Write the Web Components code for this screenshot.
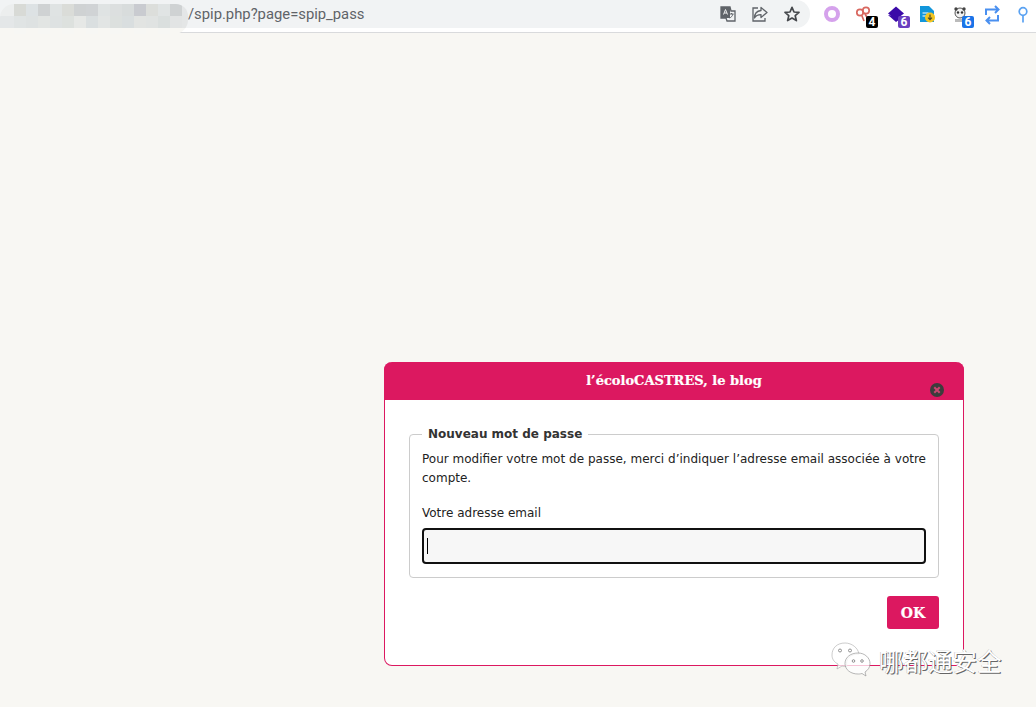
<!DOCTYPE html>
<html lang="fr">
<head>
<meta charset="utf-8">
<title>Nouveau mot de passe</title>
<style>
html, body { margin: 0; height: 100%; overflow: hidden; background: #f8f7f3; }
body { font-family: "DejaVu Sans", sans-serif; position: relative; }
</style>
</head>
<body>
<browser-bar url="/spip.php?page=spip_pass"></browser-bar>
<page-area>
  <pass-dialog heading="l’écoloCASTRES, le blog">
    <pass-form legend="Nouveau mot de passe"></pass-form>
  </pass-dialog>
</page-area>
<wechat-mark name="哪都通安全"></wechat-mark>

<script>
// top chrome toolbar, with the pixelated part of the url on top of it
const barTemplate = document.createElement('template');
barTemplate.innerHTML = `
<style>
:host { display: block; height: 33px; box-sizing: border-box; background: #fff; border-bottom: 1px solid #d9dadc; position: relative; }
.row { display: flex; align-items: flex-start; height: 32px; }
.omni { flex: 0 0 810px; height: 28px; box-sizing: border-box; background: #f1f3f4; border-radius: 0 14px 14px 0; display: flex; align-items: center; padding-left: 188px; padding-right: 9px; }
.url { flex: 1; font: 14.8px "Roboto", "Liberation Sans", sans-serif; color: #5f6368; }
.omni svg { width: 18px; height: 18px; margin-left: 14px; flex: none; }
.exts { flex: 1; height: 28px; position: relative; }
.ext { position: absolute; top: 4px; width: 22px; height: 22px; }
.ext svg { width: 22px; height: 22px; display: block; }
.badge { position: absolute; width: 12px; height: 12px; border-radius: 2px; color: #fff; font: bold 12px/12px "Roboto", sans-serif; text-align: center; left: 13px; top: 12px; }
.mosaic { position: absolute; left: 0; top: 4px; width: 188px; height: 30px; border-radius: 14px 12px 14px 0; overflow: hidden; display: grid; grid-template-columns: 14px repeat(15, 12px); grid-auto-rows: 12px; justify-content: start; }
.mosaic i { display: block; }
</style>
<div class="row">
  <div class="omni">
    <span class="url"></span>
    <svg viewBox="0 0 18 18"><path d="M2 2h9l1 4h4v10H8l-1-3H2z" fill="none" stroke="#5f6368" stroke-width="1.3"/><path d="M2 2h9v11H2z" fill="#5f6368"/><path d="M4.500 9.500 6.500 4.500l2 5M5.200 8h2.600" fill="none" stroke="#eee" stroke-width="1"/><path d="M10.500 9h4M12.500 8v1M14 9c-.5 2-2 3.500-3.500 4" fill="none" stroke="#5f6368" stroke-width="1"/></svg>
    <svg viewBox="0 0 18 18"><path d="M10 2.500 16 7.500l-6 5V9.600C6.500 9.600 4.500 11 3.500 13c0-4 2.500-7 6.500-7.500z" fill="none" stroke="#5f6368" stroke-width="1.3" stroke-linejoin="round"/><path d="M7 3H2v13h12v-3" fill="none" stroke="#5f6368" stroke-width="1.3"/></svg>
    <svg viewBox="0 0 18 18"><path d="M9 2.300 11 7l5 .4-3.800 3.300 1.200 4.900L9 13l-4.400 2.600 1.200-4.900L2 7.400 7 7z" fill="none" stroke="#45484c" stroke-width="1.700" stroke-linejoin="round"/></svg>
  </div>
  <div class="exts">
    <div class="ext" style="left:11px"><svg viewBox="0 0 22 22"><circle cx="11" cy="10" r="6" fill="none" stroke="#d5a2ec" stroke-width="4"/></svg></div>
    <div class="ext" style="left:43px"><svg viewBox="0 0 22 22"><circle cx="7" cy="8.500" r="3.200" fill="none" stroke="#d8675f" stroke-width="1.700"/><circle cx="13" cy="6.500" r="3.200" fill="none" stroke="#d8675f" stroke-width="1.700"/><path d="M12 10l3 5M9 12l2 5" stroke="#d8675f" stroke-width="1.700"/></svg><span class="badge" style="background:#000">4</span></div>
    <div class="ext" style="left:75px"><svg viewBox="0 0 22 22"><path d="M3 9.500 11 2.500l8 7-8 6z" fill="#3b0aa8"/><path d="M3 11l8 7 7-5" fill="#3b0aa8"/></svg><span class="badge" style="background:#6a3fc0">6</span></div>
    <div class="ext" style="left:105px"><svg viewBox="0 0 22 22"><path d="M5 2h9l5 5v11H5z" fill="#1296db"/><path d="M7.500 9h6M7.500 12h4" stroke="#fff" stroke-width="1.200"/><circle cx="15" cy="13.500" r="5" fill="#f3c521"/><path d="M15 10.500v5M13 13.700l2 2 2-2" fill="none" stroke="#4a4a2a" stroke-width="1.200"/></svg></div>
    <div class="ext" style="left:139px"><svg viewBox="0 0 22 22"><circle cx="11" cy="9" r="5" fill="#f2f2f2" stroke="#555" stroke-width="1"/><circle cx="7" cy="5" r="1.700" fill="#444"/><circle cx="15" cy="5" r="1.700" fill="#444"/><circle cx="9" cy="8.500" r="1.200" fill="#333"/><circle cx="13" cy="8.500" r="1.200" fill="#333"/><path d="M6 15h9v3H6z" fill="#bbb"/></svg><span class="badge" style="background:#1a73e8">6</span></div>
    <div class="ext" style="left:171px"><svg viewBox="0 0 22 22"><path d="M5 11V5.500h12M14 2l3.500 3.500L14 9M17 11v5.500H6M9 13l-3.500 3.500L9 20" fill="none" stroke="#4a90f0" stroke-width="2"/></svg></div>
    <div class="ext" style="left:202px"><svg viewBox="0 0 22 22"><circle cx="11" cy="7.500" r="3.800" fill="none" stroke="#5aa2f2" stroke-width="1.700"/><path d="M11 11.500v7" stroke="#5aa2f2" stroke-width="1.700"/></svg></div>
  </div>
</div>
<div class="mosaic"></div>
`;

// colours read off the blurred blocks of the address
const mosaicRows = [
  ['#eceeee','#d8dad6','#dde2e4','#cfd2d3','#dfe3e3','#dadcd8','#cfd2d3','#d0d3d5','#dfe3e3','#dcdfdf','#d8dcdc','#c9cbd0','#dcdedb','#e0e4e4','#cfd2d3','#e4e6e7'],
  ['#e4e7e8','#e0e4e4','#dee2e2','#e2e5e3','#dee2e2','#dde1de','#e6e8e6','#dadfe0','#e2e5e4','#dce0de','#d9dedf','#e2e4e2','#e0e3e2','#dadfde','#e2e4e4','#e4e6e6'],
  ['#f8f7f3','#f7f7f4','#f8f7f3','#f7f7f4','#f8f7f3','#f7f7f4','#f8f7f3','#f7f7f4','#f8f7f3','#f7f7f4','#f8f7f3','#f7f7f4','#f8f7f3','#f7f7f4','#f8f7f3','#f7f7f4']
];

class BrowserBar extends HTMLElement {
  constructor() {
    super();
    this.attachShadow({ mode: 'open' });
    this.shadowRoot.appendChild(barTemplate.content.cloneNode(true));
    this.shadowRoot.querySelector('.url').innerText = this.getAttribute('url');
    const mosaic = this.shadowRoot.querySelector('.mosaic');
    mosaicRows.flat().forEach(c => {
      const cell = document.createElement('i');
      cell.style.background = c;
      mosaic.appendChild(cell);
    });
  }
}

class PageArea extends HTMLElement {
  constructor() {
    super();
    this.attachShadow({ mode: 'open' });
    this.shadowRoot.innerHTML = `
<style>
:host { display: block; padding: 329px 0 0 384px; }
</style>
<slot></slot>`;
  }
}

const dialogTemplate = document.createElement('template');
dialogTemplate.innerHTML = `
<style>
:host { display: block; width: 580px; height: 304px; box-sizing: border-box; background: #fff; border: 1px solid #dc1860; border-top: 0; border-radius: 8px; position: relative; }
header { margin: 0 -1px; height: 38px; background: #dc1860; border-radius: 8px 8px 0 0; color: #fff; font: bold 13px/37px "DejaVu Serif", serif; text-align: center; -webkit-text-stroke: .2px #fff; }
.close { position: absolute; right: 19px; top: 21px; width: 14px; height: 14px; }
.body { padding: 26px 24px 0; }
</style>
<header></header>
<svg class="close" viewBox="0 0 14 14"><circle cx="7" cy="7" r="7" fill="#3c3c3c"/><path d="M4.300 4.300l5.400 5.400M9.700 4.300l-5.400 5.400" stroke="#c9466f" stroke-width="2"/></svg>
<div class="body"><slot></slot></div>
`;

class PassDialog extends HTMLElement {
  constructor() {
    super();
    this.attachShadow({ mode: 'open' });
    this.shadowRoot.appendChild(dialogTemplate.content.cloneNode(true));
    this.shadowRoot.querySelector('header').innerText = this.getAttribute('heading');
  }
}

const formTemplate = document.createElement('template');
formTemplate.innerHTML = `
<style>
:host { display: block; color: #222; font: 12px/19px "DejaVu Sans", sans-serif; }
fieldset { margin: 0; padding: 0 12px 13px; border: 1px solid #ccc; border-radius: 4px; }
legend { padding: 0 6px; font: bold 12px/17px "DejaVu Sans", sans-serif; color: #333; }
p { margin: 7px 0 0; text-align: justify; line-height: 18.5px; }
label { display: block; margin-top: 17px; }
.field { position: relative; margin-top: 5px; }
input { display: block; width: 100%; height: 36px; box-sizing: border-box; border: 2px solid #111; border-radius: 4px; background: #f7f7f7; outline: 0; padding: 0 3px; margin: 0; }
.caret { position: absolute; left: 5px; top: 10px; width: 1px; height: 16px; background: #000; }
.actions { display: flex; justify-content: flex-end; margin-top: 18px; }
button { width: 52px; height: 33px; border: 0; border-radius: 3px; background: #dc1860; color: #fff; font: bold 14px "DejaVu Serif", serif; padding: 0; -webkit-text-stroke: .2px #fff; }
</style>
<fieldset>
  <legend></legend>
  <p>Pour modifier votre mot de passe, merci d’indiquer l’adresse email associée à votre compte.</p>
  <label for="mail">Votre adresse email</label>
  <div class="field"><input id="mail" type="text"><span class="caret"></span></div>
</fieldset>
<div class="actions"><button type="button">OK</button></div>
`;

class PassForm extends HTMLElement {
  constructor() {
    super();
    this.attachShadow({ mode: 'open' });
    this.shadowRoot.appendChild(formTemplate.content.cloneNode(true));
    this.shadowRoot.querySelector('legend').innerText = this.getAttribute('legend');
  }
}

// watermark that sits over the bottom right corner of the dialog
class WechatMark extends HTMLElement {
  constructor() {
    super();
    this.attachShadow({ mode: 'open' });
    this.shadowRoot.innerHTML = `
<style>
:host { position: absolute; left: 830px; top: 642px; display: flex; align-items: center; gap: 7px; }
svg { width: 42px; height: 38px; display: block; }
span { font: 24.500px/36px "Noto Sans CJK SC", sans-serif; color: #fff; text-shadow: 1px 1px 0 #666, -.5px -.5px 0 #bbb; white-space: nowrap; }
</style>
<svg viewBox="0 0 42 38">
  <path d="M15 1C7 1 2 6 2 13c0 4 2 7 6 9l-1 5 5-3c2 .5 3 .5 5 .5C15 17 20 12 29 12 28 6 22 1 15 1z" fill="#fff" fill-opacity=".75" stroke="#aaa" stroke-width=".6"/>
  <path d="M28 11c7 0 12 5 12 10.500 0 4-2 6.500-5 8.500l1 4-4-2.500c-2 .5-3 .5-4 .5-7 0-13-4-13-10.500S21 11 28 11z" fill="#fff" fill-opacity=".75" stroke="#888" stroke-width=".6"/>
  <circle cx="10" cy="8.500" r="1.500" fill="none" stroke="#777" stroke-width=".8"/><circle cx="20" cy="8.500" r="1.500" fill="none" stroke="#777" stroke-width=".8"/>
  <circle cx="23.500" cy="19" r="1.300" fill="none" stroke="#777" stroke-width=".8"/><circle cx="32" cy="19" r="1.300" fill="none" stroke="#777" stroke-width=".8"/>
</svg>
<span></span>`;
    this.shadowRoot.querySelector('span').innerText = this.getAttribute('name');
  }
}

window.customElements.define('browser-bar', BrowserBar);
window.customElements.define('page-area', PageArea);
window.customElements.define('pass-dialog', PassDialog);
window.customElements.define('pass-form', PassForm);
window.customElements.define('wechat-mark', WechatMark);
</script>
</body>
</html>
